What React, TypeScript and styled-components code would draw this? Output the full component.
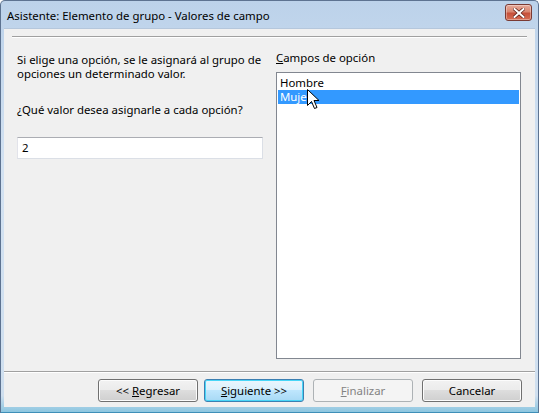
import React from 'react';
import styled, { createGlobalStyle } from 'styled-components';

const GlobalStyle = createGlobalStyle`
  html, body {
    margin: 0;
    padding: 0;
    background: #ffffff;
  }
  body {
    font-family: "Noto Sans", "Open Sans", sans-serif;
    font-size: 11.4px;
    color: #000000;
  }
`;

const Window = styled.div`
  box-sizing: border-box;
  width: 539px;
  height: 413px;
  display: flex;
  flex-direction: column;
  border: 1px solid #5d7391;
  border-bottom-color: #3e8fb8;
  border-radius: 5px 5px 0 0;
  background: linear-gradient(to bottom, #bcd2ea 0%, #d3e2f2 40%, #cfdfef 96%, #8cc6e0 100%);
  overflow: hidden;
`;

const TitleBar = styled.div`
  height: 27px;
  flex: none;
  display: flex;
  align-items: center;
  justify-content: space-between;
  padding: 0 6px 0 6px;
`;

const Title = styled.span`
  font-size: 11.4px;
  color: #000000;
  margin-top: 1px;
`;

const CloseButton = styled.div`
  width: 25px;
  height: 15px;
  margin-top: -4px;
  border: 1px solid #7a3a33;
  border-radius: 3px;
  background: linear-gradient(to bottom, #e6ab9c 0%, #d98670 45%, #c6503a 55%, #d66e55 100%);
  display: flex;
  align-items: center;
  justify-content: center;
  box-shadow: inset 0 0 0 1px rgba(255, 255, 255, 0.35);
`;

const Body = styled.div`
  flex: 1;
  margin: 0 3px 5px 3px;
  background: #f0f0f0;
  display: flex;
  flex-direction: column;
  border-top: 1px solid #b5c7dc;
`;

const Rule = styled.div<{ $inset: number }>`
  height: 1px;
  margin: 0 ${(p) => p.$inset}px;
  background: #a0a0a0;
  border-bottom: 1px solid #ffffff;
  flex: none;
`;

const Content = styled.div`
  flex: 1;
  display: flex;
  gap: 13px;
  padding: 13px 14px 12px 13px;
`;

const LeftColumn = styled.div`
  width: 246px;
  display: flex;
  flex-direction: column;
  padding-top: 2px;
`;

const RightColumn = styled.div`
  width: 245px;
  display: flex;
  flex-direction: column;
`;

const Paragraph = styled.p<{ $gap: number }>`
  margin: 0 0 ${(p) => p.$gap}px 0;
  line-height: 14px;
`;

const TextBox = styled.div`
  box-sizing: border-box;
  height: 22px;
  border: 1px solid #dbdfe6;
  border-top-color: #abadb3;
  border-left-color: #e2e3ea;
  background: #ffffff;
  padding: 0 4px;
  display: flex;
  align-items: center;
  line-height: 14px;
`;

const FieldLabel = styled.div`
  line-height: 14px;
  margin-bottom: 7px;
`;

const ListBox = styled.div`
  position: relative;
  flex: 1;
  border: 1px solid #828790;
  background: #ffffff;
  padding: 3px 1px;
`;

const ListItem = styled.div<{ $selected?: boolean }>`
  height: 14px;
  line-height: 14px;
  padding-left: 2px;
  background: ${(p) => (p.$selected ? '#3399ff' : 'transparent')};
  color: ${(p) => (p.$selected ? '#ffffff' : '#000000')};
`;

const Pointer = styled.svg`
  position: absolute;
  left: 30px;
  top: 16px;
`;

const ButtonRow = styled.div`
  display: flex;
  justify-content: flex-end;
  padding: 6px 13px 5px 0;
`;

const Button = styled.div<{ $focused?: boolean; $disabled?: boolean; $gap: number }>`
  box-sizing: border-box;
  width: 100px;
  height: 23px;
  margin-left: ${(p) => p.$gap}px;
  border-radius: 3px;
  display: flex;
  align-items: center;
  justify-content: center;
  line-height: 14px;
  border: 1px solid ${(p) => (p.$focused ? '#3c7fb1' : p.$disabled ? '#adb2b5' : '#707070')};
  color: ${(p) => (p.$disabled ? '#838383' : '#000000')};
  background: ${(p) =>
    p.$disabled
      ? '#f4f4f4'
      : p.$focused
        ? 'linear-gradient(to bottom, #eaf6fd 0%, #d9f0fc 50%, #bee6fd 50%, #a7d9f5 100%)'
        : 'linear-gradient(to bottom, #f2f2f2 0%, #ebebeb 50%, #dddddd 50%, #cfcfcf 100%)'};
  box-shadow: ${(p) =>
    p.$focused ? 'inset 0 0 0 1px #48d6f7' : p.$disabled ? 'none' : 'inset 0 0 0 1px #fcfcfc'};
`;

export default function App() {
  return (
    <>
      <GlobalStyle />
      <Window>
        <TitleBar>
          <Title>Asistente: Elemento de grupo - Valores de campo</Title>
          <CloseButton>
            <svg width="12" height="10" viewBox="0 0 12 10">
              <path d="M1.5 1 L10.5 9 M10.5 1 L1.5 9" stroke="#5a1d16" strokeWidth="3.4" strokeLinecap="square" />
              <path d="M1.5 1 L10.5 9 M10.5 1 L1.5 9" stroke="#ffffff" strokeWidth="2" strokeLinecap="square" />
            </svg>
          </CloseButton>
        </TitleBar>
        <Body>
          <div style={{ height: 7 }} />
          <Rule $inset={8} />
          <Content>
            <LeftColumn>
              <Paragraph $gap={22}>
                Si elige una opción, se le asignará al grupo de
                <br />
                opciones un determinado valor.
              </Paragraph>
              <Paragraph $gap={20}>¿Qué valor desea asignarle a cada opción?</Paragraph>
              <TextBox>2</TextBox>
            </LeftColumn>
            <RightColumn>
              <FieldLabel>
                <u>C</u>ampos de opción
              </FieldLabel>
              <ListBox>
                <ListItem>Hombre</ListItem>
                <ListItem $selected>Mujer</ListItem>
                <Pointer width="13" height="20" viewBox="0 0 13 20">
                  <path
                    d="M0.5 0.5 L0.5 16.5 L4.5 12.5 L7.5 19.5 L10 18.5 L7 11.5 L12 11.5 Z"
                    fill="#ffffff"
                    stroke="#000000"
                    strokeWidth="1"
                    strokeLinejoin="miter"
                  />
                </Pointer>
              </ListBox>
            </RightColumn>
          </Content>
          <Rule $inset={0} />
          <ButtonRow>
            <Button $gap={0}>
              &lt;&lt;&nbsp;<u>R</u>egresar
            </Button>
            <Button $gap={6} $focused>
              <u>S</u>iguiente &gt;&gt;
            </Button>
            <Button $gap={9} $disabled>
              <u>F</u>inalizar
            </Button>
            <Button $gap={9}>Cancelar</Button>
          </ButtonRow>
        </Body>
      </Window>
    </>
  );
}
